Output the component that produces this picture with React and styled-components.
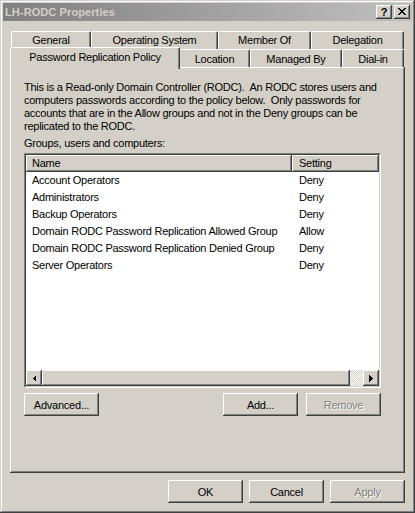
import React from 'react';
import styled, { createGlobalStyle } from 'styled-components';

const face = '#d4d0c8';
const light = '#ffffff';
const shadow = '#808080';
const dark = '#404040';

const GlobalStyle = createGlobalStyle`
  html, body { margin: 0; padding: 0; background: ${face}; }
  body {
    font-family: "Liberation Sans", Arial, sans-serif;
    font-size: 11px;
    letter-spacing: -0.25px;
    color: #000;
  }
  * { box-sizing: border-box; }
`;

const raised = `
  box-shadow: inset -1px -1px ${dark}, inset 1px 1px ${light}, inset -2px -2px ${shadow}, inset 2px 2px ${face};
`;

const Window = styled.div`
  width: 415px;
  height: 513px;
  padding: 3px;
  background: ${face};
  box-shadow: inset -1px -1px ${dark}, inset 1px 1px ${face}, inset -2px -2px ${shadow}, inset 2px 2px ${light};
  display: flex;
  flex-direction: column;
`;

const TitleBar = styled.div`
  height: 18px;
  display: flex;
  align-items: center;
  padding: 0 2px 0 2px;
  background: linear-gradient(to right, #808080, #c0c0c0);
`;

const TitleText = styled.div`
  flex: 1;
  font-weight: bold;
  letter-spacing: 0.1px;
  color: ${face};
  white-space: nowrap;
`;

const CaptionButton = styled.div`
  width: 16px;
  height: 14px;
  margin-left: ${p => p.$gap || 0}px;
  background: ${face};
  ${raised}
  display: flex;
  align-items: center;
  justify-content: center;
  font-weight: bold;
  font-size: 11px;
  line-height: 14px;
  padding-bottom: 1px;
`;

const Content = styled.div`
  flex: 1;
  display: flex;
  flex-direction: column;
  padding: 10px 7px 7px 7px;
`;

const Tabs = styled.div`
  display: flex;
  flex-direction: column;
  padding-left: 1px;
`;

const TabRow = styled.div`
  display: flex;
  height: 18px;
  align-items: flex-start;
`;

const Tab = styled.div`
  width: ${p => p.$w + (p.$active ? 2 : 0)}px;
  height: ${p => (p.$active ? 22 : 18)}px;
  margin: ${p => (p.$active ? '-2px -1px 0 -1px' : '0')};
  position: relative;
  z-index: ${p => (p.$active ? 2 : 1)};
  background: ${face};
  border-left: 1px solid ${light};
  border-top: 1px solid ${light};
  border-right: 1px solid ${dark};
  border-radius: 2px 2px 0 0;
  box-shadow: inset -1px 0 ${shadow};
  display: flex;
  justify-content: center;
  padding-top: ${p => p.$pt}px;
  line-height: 13px;
  white-space: nowrap;
`;

const Panel = styled.div`
  flex: 1;
  display: flex;
  flex-direction: column;
  background: ${face};
  padding: 14px 24px 0 14px;
  box-shadow: inset -1px -1px ${dark}, inset 1px 1px ${light}, inset -2px -2px ${shadow};
`;

const Para = styled.div`
  line-height: 13px;
  white-space: pre;
`;

const Label = styled.div`
  margin-top: 4px;
  line-height: 13px;
`;

const ListOuter = styled.div`
  margin-top: 3px;
  height: 235px;
  border: 1px solid;
  border-color: ${shadow} ${light} ${light} ${shadow};
  display: flex;
`;

const ListInner = styled.div`
  flex: 1;
  border: 1px solid;
  border-color: ${dark} ${face} ${face} ${dark};
  background: #fff;
  display: flex;
  flex-direction: column;
`;

const Header = styled.div`
  display: flex;
  height: 17px;
`;

const HeaderCell = styled.div`
  width: ${p => (p.$w ? `${p.$w}px` : 'auto')};
  flex: ${p => (p.$w ? 'none' : 1)};
  background: ${face};
  ${raised}
  padding: 2px 0 0 ${p => p.$pl}px;
  line-height: 13px;
`;

const Rows = styled.div`
  flex: 1;
`;

const Row = styled.div`
  display: flex;
  height: 17px;
  line-height: 17px;
`;

const Cell = styled.div`
  width: ${p => (p.$w ? `${p.$w}px` : 'auto')};
  flex: ${p => (p.$w ? 'none' : 1)};
  padding-left: ${p => p.$pl}px;
  white-space: nowrap;
`;

const ScrollBar = styled.div`
  display: flex;
  height: 16px;
  background: ${face};
`;

const ScrollButton = styled.div`
  width: 16px;
  height: 16px;
  background: ${face};
  ${raised}
  display: flex;
  align-items: center;
  justify-content: center;
`;

const Thumb = styled.div`
  width: 308px;
  background: ${face};
  ${raised}
`;

const Track = styled.div`
  flex: 1;
  background: repeating-conic-gradient(${light} 0 25%, ${face} 0 50%) 0 0 / 2px 2px;
`;

const ButtonRow = styled.div`
  display: flex;
  margin-top: ${p => p.$mt}px;
  justify-content: ${p => p.$justify || 'flex-start'};
  gap: ${p => p.$gap || 0}px;
`;

const Button = styled.div`
  width: 75px;
  height: 23px;
  background: ${face};
  ${raised}
  display: flex;
  align-items: center;
  justify-content: center;
  color: ${p => (p.$disabled ? shadow : '#000')};
  text-shadow: ${p => (p.$disabled ? `1px 1px ${light}` : 'none')};
  margin-left: ${p => (p.$push ? 'auto' : '0')};
  margin-right: ${p => p.$mr || 0}px;
`;

const CloseGlyph = () => {
  const px = [
    [0, 0], [1, 0], [6, 0], [7, 0],
    [1, 1], [2, 1], [5, 1], [6, 1],
    [2, 2], [3, 2], [4, 2], [5, 2],
    [3, 3], [4, 3],
    [2, 4], [3, 4], [4, 4], [5, 4],
    [1, 5], [2, 5], [5, 5], [6, 5],
    [0, 6], [1, 6], [6, 6], [7, 6],
  ];
  return (
    <svg width="8" height="7" viewBox="0 0 8 7" shapeRendering="crispEdges">
      {px.map(([x, y]) => <rect key={`${x}-${y}`} x={x} y={y} width="1" height="1" fill="#000" />)}
    </svg>
  );
};

const Arrow = ({ dir }) => (
  <svg width="4" height="7" viewBox="0 0 4 7" shapeRendering="crispEdges">
    {dir === 'left'
      ? <polygon points="4,0 4,7 0.5,3.5" fill="#000" />
      : <polygon points="0,0 0,7 3.5,3.5" fill="#000" />}
  </svg>
);

const row1 = [
  { label: 'General', w: 80 },
  { label: 'Operating System', w: 127 },
  { label: 'Member Of', w: 93 },
  { label: 'Delegation', w: 93 },
];

const row2 = [
  { label: 'Password Replication Policy', w: 168, active: true },
  { label: 'Location', w: 71 },
  { label: 'Managed By', w: 92 },
  { label: 'Dial-in', w: 62 },
];

const entries = [
  ['Account Operators', 'Deny'],
  ['Administrators', 'Deny'],
  ['Backup Operators', 'Deny'],
  ['Domain RODC Password Replication Allowed Group', 'Allow'],
  ['Domain RODC Password Replication Denied Group', 'Deny'],
  ['Server Operators', 'Deny'],
];

export default function App() {
  return (
    <>
      <GlobalStyle />
      <Window>
        <TitleBar>
          <TitleText>LH-RODC Properties</TitleText>
          <CaptionButton>?</CaptionButton>
          <CaptionButton $gap={2}><CloseGlyph /></CaptionButton>
        </TitleBar>
        <Content>
          <Tabs>
            <TabRow>
              {row1.map(t => <Tab key={t.label} $w={t.w} $pt={2}>{t.label}</Tab>)}
            </TabRow>
            <TabRow>
              {row2.map(t => (
                <Tab key={t.label} $w={t.w} $active={t.active} $pt={3}>{t.label}</Tab>
              ))}
            </TabRow>
          </Tabs>
          <Panel>
            <Para>
              {'This is a Read-only Domain Controller (RODC).  An RODC stores users and\n'}
              {'computers passwords according to the policy below.  Only passwords for\n'}
              {'accounts that are in the Allow groups and not in the Deny groups can be\n'}
              {'replicated to the RODC.'}
            </Para>
            <Label>Groups, users and computers:</Label>
            <ListOuter>
              <ListInner>
                <Header>
                  <HeaderCell $w={266} $pl={6}>Name</HeaderCell>
                  <HeaderCell $pl={7}>Setting</HeaderCell>
                </Header>
                <Rows>
                  {entries.map(([name, setting]) => (
                    <Row key={name}>
                      <Cell $w={266} $pl={6}>{name}</Cell>
                      <Cell $pl={7}>{setting}</Cell>
                    </Row>
                  ))}
                </Rows>
                <ScrollBar>
                  <ScrollButton><Arrow dir="left" /></ScrollButton>
                  <Thumb />
                  <Track />
                  <ScrollButton><Arrow dir="right" /></ScrollButton>
                </ScrollBar>
              </ListInner>
            </ListOuter>
            <ButtonRow $mt={5}>
              <Button>Advanced...</Button>
              <Button $push $mr={8}>Add...</Button>
              <Button $disabled>Remove</Button>
            </ButtonRow>
          </Panel>
          <ButtonRow $mt={7} $justify="flex-end" $gap={6}>
            <Button>OK</Button>
            <Button>Cancel</Button>
            <Button $disabled>Apply</Button>
          </ButtonRow>
        </Content>
      </Window>
    </>
  );
}
